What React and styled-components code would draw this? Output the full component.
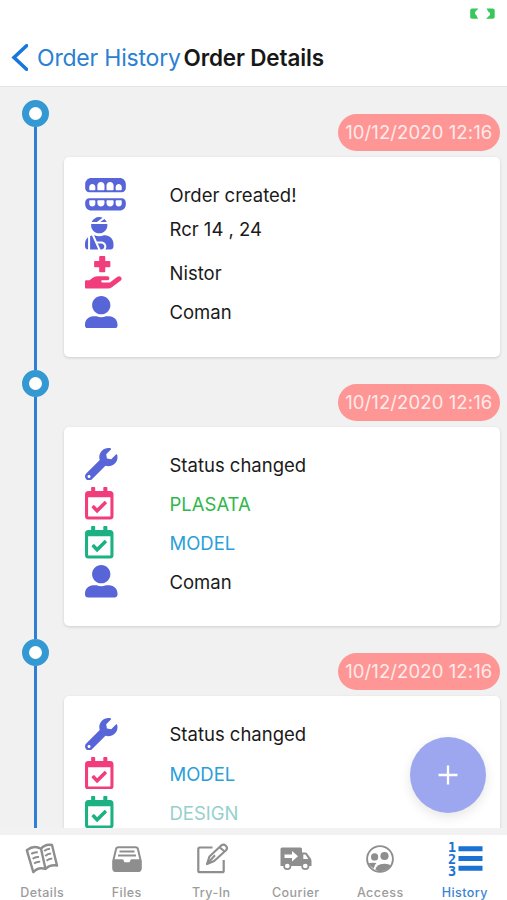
import styled, { createGlobalStyle } from "styled-components";
import {
  FaTeethOpen,
  FaUserInjured,
  FaHandHoldingMedical,
  FaUserAlt,
  FaWrench,
  FaRegCalendarCheck,
} from "react-icons/fa";

const purple = "#5865d8";
const pink = "#f23d7c";
const green = "#1bb182";

// the glyphs share a height, the width follows their own proportions
const widths = new Map([
  [FaTeethOpen, 41],
  [FaUserInjured, 28.5],
  [FaHandHoldingMedical, 36.5],
  [FaUserAlt, 32.5],
  [FaWrench, 32.5],
  [FaRegCalendarCheck, 28.5],
]);

const entries = [
  {
    date: "10/12/2020 12:16",
    rows: [
      { icon: FaTeethOpen, color: purple, text: "Order created!" },
      { icon: FaUserInjured, color: purple, text: "Rcr 14 , 24", raised: true },
      { icon: FaHandHoldingMedical, color: pink, text: "Nistor" },
      { icon: FaUserAlt, color: purple, text: "Coman" },
    ],
  },
  {
    date: "10/12/2020 12:16",
    rows: [
      { icon: FaWrench, color: purple, text: "Status changed" },
      { icon: FaRegCalendarCheck, color: pink, text: "PLASATA", ink: "#2fb84b" },
      { icon: FaRegCalendarCheck, color: green, text: "MODEL", ink: "#2a9fd8" },
      { icon: FaUserAlt, color: purple, text: "Coman" },
    ],
  },
  {
    date: "10/12/2020 12:16",
    rows: [
      { icon: FaWrench, color: purple, text: "Status changed" },
      { icon: FaRegCalendarCheck, color: pink, text: "MODEL", ink: "#2a9fd8" },
      { icon: FaRegCalendarCheck, color: green, text: "DESIGN", ink: "#96d0cc" },
    ],
  },
];

const BookIcon = () => (
  <svg width="34" height="32" viewBox="0 0 34 32" fill="none" stroke="currentColor">
    <path
      d="M1.8 7.2C6 4 11.5 3.2 16 5.8C18.5 2.6 22 1.1 27 2L32 22.5C27.5 21.8 23.5 22.8 20.5 26C16 24.3 11.5 25.5 8.3 29.2Z"
      strokeWidth="2.4"
      strokeLinejoin="round"
    />
    <path d="M16 5.8L20.5 26" strokeWidth="2.4" />
    <path
      d="M6.2 10.9Q9 8.9 12.8 9.2M7.6 15.7Q10.5 13.6 14 14.1M9 20.5Q12 18.4 15.2 18.8M19.2 8.1Q21.6 5.9 25 5.8M20.3 13Q22.8 10.7 26.1 10.6M21.5 17.8Q24 15.5 27.3 15.4"
      strokeWidth="2"
    />
  </svg>
);

const FilesIcon = () => (
  <svg width="30" height="27" viewBox="0 0 30 27">
    <path
      d="M4 3.2Q4.4 1.2 6.4 1.2H23.6Q25.6 1.2 26 3.2L28.8 15V22Q28.8 25 26 25H4Q1.2 25 1.2 22V15Z"
      fill="none"
      stroke="currentColor"
      strokeWidth="2"
    />
    <path
      d="M1 13.2H10.3Q11.3 13.2 11.6 14.2L12.4 16.2H17.6L18.4 14.2Q18.7 13.2 19.7 13.2H29V23Q29 26 26 26H4Q1 26 1 23Z"
      fill="currentColor"
    />
    <path d="M7.5 5.5H22.5M6 9.5H24" stroke="currentColor" strokeWidth="1.8" />
  </svg>
);

const TryInIcon = () => (
  <svg width="33" height="33" viewBox="0 0 33 33" fill="none" stroke="currentColor">
    <path
      d="M17.5 4.5H4.8Q3.3 4.5 3.3 6V27.7Q3.3 29.2 4.8 29.2H27.2Q28.7 29.2 28.7 27.7V17"
      strokeWidth="2.2"
    />
    <path
      d="M12 21L14.5 13.4L26.2 2.6Q28.5.7 30.8 2.7Q33 5 31 7.3L19.2 18Z"
      strokeWidth="2.1"
      strokeLinejoin="round"
    />
    <path d="M12 21L20 12.3M24.6 4.2L29.6 8.6" strokeWidth="2" />
  </svg>
);

const TruckIcon = () => (
  <svg width="32" height="24" viewBox="0 0 32 24">
    <path
      d="M.5 2Q.5 .5 2 .5H20.5Q22 .5 22 2V5.5H25.2Q26.4 5.5 27.2 6.6L30 10.6Q31.5 11.8 31.5 14V19H.5Z"
      fill="currentColor"
    />
    <path d="M4.5 7.5H12V4L18 9.2L12 14.5V11H4.5ZM23.3 7.5H25.5L28.3 12H23.3Z" fill="#fff" />
    <circle cx="7.3" cy="19" r="3.2" fill="#fff" stroke="currentColor" strokeWidth="1.7" />
    <circle cx="25.3" cy="19" r="3.2" fill="#fff" stroke="currentColor" strokeWidth="1.7" />
  </svg>
);

const AccessIcon = () => (
  <svg width="28" height="28" viewBox="0 0 28 28" fill="currentColor">
    <circle cx="14" cy="14" r="12.9" fill="none" stroke="currentColor" strokeWidth="1.9" />
    <circle cx="8.6" cy="11.9" r="3.6" />
    <circle cx="18.5" cy="11" r="4.1" />
    <path d="M2.3 18.2Q6 17.2 10.4 18Q8.5 19.8 7.7 23.5Q4 21.5 2.3 18.2Z" />
    <path d="M9.3 24.8Q10 19.3 18.2 18.7Q22.5 18.6 24.8 20.2Q21.5 25.8 14 26.2Q11.3 26 9.3 24.8Z" />
  </svg>
);

const NumberListIcon = () => (
  <svg width="36" height="37" viewBox="0 0 36 37" fill="currentColor" overflow="visible">
    <path d="M11.5 5.3H35.5V10.3H11.5ZM11.5 15H35.5V20H11.5ZM11.5 24.8H35.5V29.8H11.5Z" />
    <text fontFamily="DejaVu Sans Mono" fontWeight="700" fontSize="13.5">
      <tspan x="1" y="10.8">1</tspan>
      <tspan x="1" y="22.6">2</tspan>
      <tspan x="1" y="34.6">3</tspan>
    </text>
  </svg>
);

const tabs = [
  { label: "Details", icon: BookIcon },
  { label: "Files", icon: FilesIcon },
  { label: "Try-In", icon: TryInIcon },
  { label: "Courier", icon: TruckIcon },
  { label: "Access", icon: AccessIcon },
  { label: "History", icon: NumberListIcon, active: true },
];

const App = () => {
  return (
    <Screen>
      <GlobalStyle />
      <StatusBar>
        <svg width="25" height="12" viewBox="0 0 25 12" fill="#38c75b">
          <path d="M2 .5H8.5L5 4V6.5H6L8 10.8H2Q.2 10.8 .2 9V2.5Q.2 .5 2 .5Z" />
          <path d="M16.5 .5H22.7Q24.7 .5 24.7 2.5V9Q24.7 10.8 22.7 10.8H16L20 7V4.5H18.8Z" />
        </svg>
      </StatusBar>
      <Header>
        <BackButton>
          <svg width="17" height="28" viewBox="0 0 17 28" fill="none">
            <path d="M15.5 1.8L3 13.5L15.5 25.2" stroke="#1677dc" strokeWidth="3.6" strokeLinecap="round" />
          </svg>
          <BackLabel>Order History</BackLabel>
        </BackButton>
        <Title>Order Details</Title>
      </Header>
      <Content>
        {entries.map((entry, i) => (
          <Entry key={i}>
            <Rail>
              <Dot />
              <Line />
            </Rail>
            <Body>
              <DateBadge>{entry.date}</DateBadge>
              <Card>
                {entry.rows.map(({ icon: Icon, color, text, ink, raised }) => (
                  <Row key={text + color}>
                    <IconCell $color={color} $width={widths.get(Icon)}>
                      <Icon />
                    </IconCell>
                    <RowText $ink={ink} $raised={raised}>
                      {text}
                    </RowText>
                  </Row>
                ))}
              </Card>
            </Body>
          </Entry>
        ))}
      </Content>
      <Fab aria-label="Add">
        <svg width="20" height="20" viewBox="0 0 20 20">
          <path d="M10 .5V19.5M.5 10H19.5" stroke="#fff" strokeWidth="2.3" />
        </svg>
      </Fab>
      <TabBar>
        {tabs.map(({ label, icon: Icon, active }) => (
          <Tab key={label} $active={active}>
            <TabIcon>
              <Icon />
            </TabIcon>
            <TabLabel $active={active}>{label}</TabLabel>
          </Tab>
        ))}
      </TabBar>
    </Screen>
  );
};

const GlobalStyle = createGlobalStyle`
  * {
    box-sizing: border-box;
  }

  body {
    margin: 0;
    font-family: Inter, "Liberation Sans", sans-serif;
  }

  button {
    padding: 0;
    border: none;
    background: none;
    font: inherit;
  }
`;

const Screen = styled.div`
  position: relative;
  display: flex;
  flex-direction: column;
  height: 900px;
  overflow: hidden;
  background: #fff;
`;

const StatusBar = styled.div`
  display: flex;
  flex: none;
  justify-content: flex-end;
  height: 30px;
  padding: 8px 12px 0 0;
`;

const Header = styled.header`
  display: flex;
  flex: none;
  align-items: center;
  height: 57px;
  padding: 0 11px;
  border-bottom: 1px solid #e4e4e4;
  white-space: nowrap;
`;

const BackButton = styled.button`
  display: flex;
  align-items: center;
  width: 172.5px;
  gap: 9px;
  color: #2a80d3;
`;

const BackLabel = styled.span`
  font-size: 23px;
  line-height: 28px;
  letter-spacing: -0.2px;
`;

const Title = styled.h1`
  margin: 0;
  color: #171717;
  font-size: 22.5px;
  font-weight: 600;
  line-height: 28px;
  letter-spacing: -0.15px;
`;

const Content = styled.main`
  flex: none;
  height: 741px;
  padding-top: 13px;
  overflow: hidden;
  background: #f1f1f1;
`;

const Entry = styled.section`
  display: flex;
  height: 269.7px;
  padding: 0 7px 0 22px;
`;

const Rail = styled.div`
  display: flex;
  flex-direction: column;
  align-items: center;
  width: 27px;
  margin-right: 15px;
`;

const Dot = styled.div`
  flex: none;
  width: 27px;
  height: 27px;
  border: 7px solid #3498d2;
  border-radius: 50%;
  background: #fff;
`;

const Line = styled.div`
  flex: 1;
  width: 3px;
  background: #2e80d5;
`;

const Body = styled.div`
  display: flex;
  flex: 1;
  flex-direction: column;
  padding-top: 14px;
`;

const DateBadge = styled.div`
  align-self: flex-end;
  flex: none;
  width: 162.5px;
  height: 37px;
  border-radius: 19px;
  background: #ff9696;
  color: #ffebe9;
  font-size: 18.5px;
  line-height: 37px;
  letter-spacing: 0.1px;
  text-align: center;
  white-space: nowrap;
`;

const Card = styled.div`
  flex: none;
  height: 199.5px;
  margin-top: 6px;
  padding: 18.5px 21px;
  border-radius: 5px;
  background: #fff;
  box-shadow: 0 1px 3px rgba(0, 0, 0, 0.15);
`;

const Row = styled.div`
  display: flex;
  align-items: center;
  height: 39.1px;
`;

const IconCell = styled.div`
  display: flex;
  flex: none;
  width: 84.5px;
  padding-bottom: 1px;
  color: ${(props) => props.$color};

  svg {
    width: ${(props) => props.$width}px;
    height: 32.5px;
  }
`;

const RowText = styled.span`
  padding-bottom: ${(props) => (props.$raised ? "10px" : "0")};
  color: ${(props) => props.$ink || "#1a1a1a"};
  font-size: 18.5px;
  line-height: 24px;
  white-space: nowrap;
`;

const Fab = styled.button`
  position: absolute;
  top: 737px;
  right: 21px;
  display: flex;
  align-items: center;
  justify-content: center;
  width: 76px;
  height: 76px;
  border-radius: 50%;
  background: #9da7ef;
  box-shadow: 0 4px 12px rgba(0, 0, 0, 0.1);
`;

const TabBar = styled.nav`
  display: grid;
  flex: none;
  grid-template-columns: repeat(6, 1fr);
  height: 72px;
  border-top: 7px solid #f2f2f2;
`;

const Tab = styled.button`
  display: flex;
  flex-direction: column;
  align-items: center;
  color: ${(props) => (props.$active ? "#1a73d2" : "#8e8e8e")};
`;

const TabIcon = styled.span`
  display: flex;
  align-items: center;
  justify-content: center;
  height: 42px;
  margin-top: 3px;
`;

const TabLabel = styled.span`
  margin-top: 5px;
  color: ${(props) => (props.$active ? "#3a84d4" : "#9c9c9c")};
  font-size: 12.5px;
  font-weight: 500;
  line-height: 16px;
  letter-spacing: 0.45px;
`;

export default App;
